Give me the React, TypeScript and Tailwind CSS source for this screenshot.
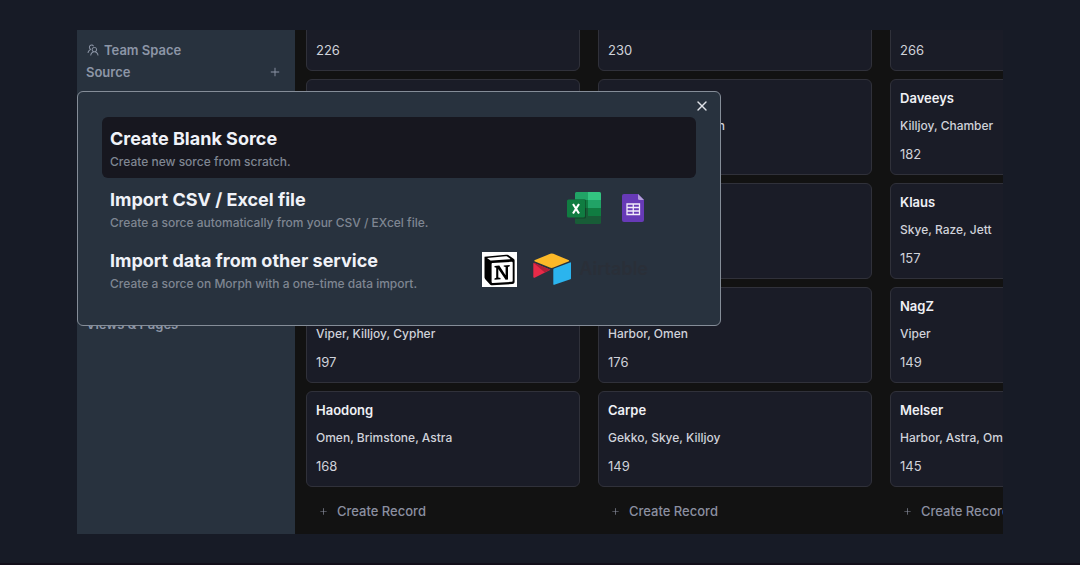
import React from "react";
import { AiOutlinePlus, AiOutlineTeam } from "react-icons/ai";
import { X } from "lucide-react";

type PlayerRecord = { name: string; agents: string; score: number };

const columns: PlayerRecord[][] = [
  [
    { name: "Zekken", agents: "Jett, Raze, Neon", score: 226 },
    { name: "Nitro", agents: "Sova, Breach", score: 214 },
    { name: "Saadhak", agents: "Breach, Raze", score: 205 },
    { name: "Marved", agents: "Viper, Killjoy, Cypher", score: 197 },
    { name: "Haodong", agents: "Omen, Brimstone, Astra", score: 168 },
  ],
  [
    { name: "Aspas", agents: "Jett, Raze", score: 230 },
    { name: "Crashies", agents: "Skye, Cypher, Omen", score: 211 },
    { name: "Sacy", agents: "Sova, Fade", score: 190 },
    { name: "Mako", agents: "Harbor, Omen", score: 176 },
    { name: "Carpe", agents: "Gekko, Skye, Killjoy", score: 149 },
  ],
  [
    { name: "Derke", agents: "Jett, Raze", score: 266 },
    { name: "Daveeys", agents: "Killjoy, Chamber", score: 182 },
    { name: "Klaus", agents: "Skye, Raze, Jett", score: 157 },
    { name: "NagZ", agents: "Viper", score: 149 },
    { name: "Melser", agents: "Harbor, Astra, Omen", score: 145 },
  ],
];

function ExcelLogo() {
  return (
    <svg className="h-8 w-9 shrink-0" viewBox="0 0 36 32" aria-label="Excel" role="img">
      <rect x="9" y="0" width="26" height="32" rx="1.5" fill="#185c37" />
      <path d="M10.500 0H22v8H9V1.500A1.500 1.500 0 0 1 10.500 0Z" fill="#21a366" />
      <path d="M22 0h11.500A1.500 1.500 0 0 1 35 1.500V8H22Z" fill="#33c481" />
      <rect x="9" y="8" width="13" height="8" fill="#107c41" />
      <rect x="22" y="8" width="13" height="8" fill="#21a366" />
      <rect x="22" y="16" width="13" height="8" fill="#107c41" />
      <path d="M9 7h9.500A1.500 1.500 0 0 1 20 8.500V25a1.500 1.500 0 0 1-1.500 1.500H9Z" fill="#000" opacity=".25" />
      <rect x="1" y="7.500" width="18" height="18" rx="1.500" fill="#107c41" />
      <path d="m7 12 6 9.500M13 12l-6 9.500" stroke="#fff" strokeWidth="2.100" fill="none" />
    </svg>
  );
}

function SheetsLogo() {
  return (
    <svg className="h-7 w-[22px] shrink-0" viewBox="0 0 22 28" aria-label="Sheets" role="img">
      <path d="M2 0h14l6 6v20a2 2 0 0 1-2 2H2a2 2 0 0 1-2-2V2a2 2 0 0 1 2-2Z" fill="#673ab7" />
      <path d="m16 0 6 6h-4.500A1.500 1.500 0 0 1 16 4.500Z" fill="#b39ddb" />
      <path d="M5 10h12.500v10.500H5ZM5 13.500h12.500M5 17h12.500M11.250 10v10.500" stroke="#f1ebfa" strokeWidth="1.300" fill="none" />
    </svg>
  );
}

function NotionLogo() {
  return (
    <svg className="size-[35px] shrink-0" viewBox="0 0 35 35" aria-label="Notion" role="img">
      <rect width="35" height="35" fill="#fff" />
      <path d="M2.500 4.800 24 2.800c1.500-.1 2.300.1 3.300.9l4.300 3c.8.600 1 .9 1 1.900v20.900c0 1.700-.6 2.400-2.300 2.500L10.500 33.300c-1.300.1-2-.2-2.700-1.100L3.500 27.400c-.8-1-1-1.700-1-2.600Z" fill="#000" />
      <path d="M5 5.900 23.500 4.300c1-.1 1.400 0 2 .5l2.500 1.800c.5.400.3.600-.3.700L9.700 8.500c-.9.100-1.300-.1-1.900-.6Z" fill="#fff" />
      <path d="M10.600 11 29.500 9.800c.8 0 1.200.3 1.200 1.100v17.600c0 .8-.3 1.200-1.200 1.300L10.900 31c-.9 0-1.300-.3-1.300-1.200V12.100c0-.7.3-1.100 1-1.100Z" fill="#fff" />
      <path d="m12.500 14 4.800-.4 6.300 9.600v-8.100l-1.900-.5v-1.200l6-.4v1.200l-1.700.7v12.500l-2.400.4-7.300-10.900v8.600l2.200.6v1.200l-6 .4v-1.200l1.700-.7V15.700l-1.700-.5Z" fill="#000" />
    </svg>
  );
}

function AirtableLogo() {
  return (
    <svg className="h-8 w-[38px] shrink-0" viewBox="0 0 38 32" aria-label="Airtable" role="img">
      <path d="M17.200.8a4 4 0 0 1 3.200 0l15 6.200c1 .4 1 1.200 0 1.600l-15 6a5 5 0 0 1-3.600 0l-14.800-6c-.9-.4-.9-1.200 0-1.600Z" fill="#fcb928" />
      <path d="M20.300 16.500c0-.5.300-.8.700-1l16-6.100c.5-.2 1 .1 1 .7v15.300c0 .4-.2.700-.6.900l-16.100 5.500c-.6.200-1-.1-1-.6Z" fill="#2bb4ee" />
      <path d="M.3 10.700c0-.6.500-1 1-.8l16.100 6.800-15.800 8c-.7.400-1.300 0-1.300-.7Z" fill="#e82a48" />
      <path d="m17.400 16.700-5.600 2.800L.7 10.100c.2-.2.400-.3.600-.2Z" fill="#b01f38" />
    </svg>
  );
}

function RecordCard({ record }: { record: PlayerRecord }) {
  return (
    <article className="flex shrink-0 flex-col gap-2 rounded-md border border-[#30313a] bg-[#1a1c27] px-[9px] pt-2 pb-[10px] text-[13px] leading-5 whitespace-nowrap text-[#d0d2da]">
      <h3 className="font-semibold text-[#eff0f5]">{record.name}</h3>
      <p className="text-xs leading-5 font-medium">{record.agents}</p>
      <p>{record.score}</p>
    </article>
  );
}

type OptionProps = {
  title: string;
  description: string;
  active?: boolean;
  children?: React.ReactNode;
};

function ImportOption({ title, description, active, children }: OptionProps) {
  return (
    <button
      type="button"
      className={
        active
          ? "flex w-full items-center justify-between rounded-md bg-[#17171f] pt-[9px] pr-12 pb-[7px] pl-2 text-left"
          : "flex w-full items-center justify-between rounded-md pt-[9px] pr-12 pb-[7px] pl-2 text-left"
      }
    >
      <span className="flex flex-col">
        <span className="text-lg leading-[26px] font-bold text-[#f0f2f8]">{title}</span>
        <span className="text-xs leading-[19px] font-medium text-[#7f8692]">{description}</span>
      </span>
      {children}
    </button>
  );
}

export default function App() {
  return (
    <div className="flex h-screen flex-col border-b-2 border-[#120f1a] bg-[#171b26] px-[77px] pt-[30px] pb-[29px] font-['Inter',sans-serif]">
      <div className="relative flex min-h-0 flex-1">
        <div className="flex min-w-0 flex-1 overflow-hidden bg-[#121212]">
          <aside className="flex w-[218px] shrink-0 flex-col bg-[#28323e] px-[9px] pt-[9px] text-[13px] leading-[22px] font-semibold text-[#8d96a7]">
            <div className="flex items-center gap-1">
              <AiOutlineTeam className="size-[14px]" />
              <span>Team Space</span>
            </div>
            <div className="flex items-center justify-between pr-[5px]">
              <h2>Source</h2>
              <button type="button" aria-label="Add source">
                <AiOutlinePlus className="size-3" />
              </button>
            </div>
            <h2 className="mt-[230px]">Views &amp; Pages</h2>
          </aside>
          <main className="flex min-w-0 flex-1 gap-[18px] overflow-hidden pl-[11px]">
            {columns.map((records, index) => (
              <section key={index} className="flex w-[274px] shrink-0 flex-col justify-end gap-2">
                {records.map((record) => (
                  <RecordCard key={record.name} record={record} />
                ))}
                <button
                  type="button"
                  className="flex shrink-0 items-center gap-[9px] px-[13px] pt-[5px] pb-3 text-[13px] leading-[22px] font-medium whitespace-nowrap text-[#8b8fa0]"
                >
                  <AiOutlinePlus className="size-[9px]" />
                  Create Record
                </button>
              </section>
            ))}
          </main>
        </div>
        <div
          role="dialog"
          aria-label="Create source"
          className="absolute top-[61px] left-0 w-[644px] max-w-full rounded-md border border-[#858d98] bg-[#28323e] px-6 pt-[25px] pb-[25px]"
        >
          <button type="button" aria-label="Close" className="absolute top-1.5 right-2.5 text-[#dfe2e8]">
            <X className="size-4" strokeWidth={2} />
          </button>
          <ImportOption active title="Create Blank Sorce" description="Create new sorce from scratch." />
          <ImportOption title="Import CSV / Excel file" description="Create a sorce automatically from your CSV / EXcel file.">
            <span className="flex items-center gap-5 pr-1 pb-[3px]">
              <ExcelLogo />
              <SheetsLogo />
            </span>
          </ImportOption>
          <ImportOption title="Import data from other service" description="Create a sorce on Morph with a one-time data import.">
            <span className="flex items-center gap-4 pb-[3px]">
              <NotionLogo />
              <span className="flex items-center gap-2">
                <AirtableLogo />
                <span className="text-lg leading-6 font-semibold text-[#2a2f38]">Airtable</span>
              </span>
            </span>
          </ImportOption>
        </div>
      </div>
    </div>
  );
}
